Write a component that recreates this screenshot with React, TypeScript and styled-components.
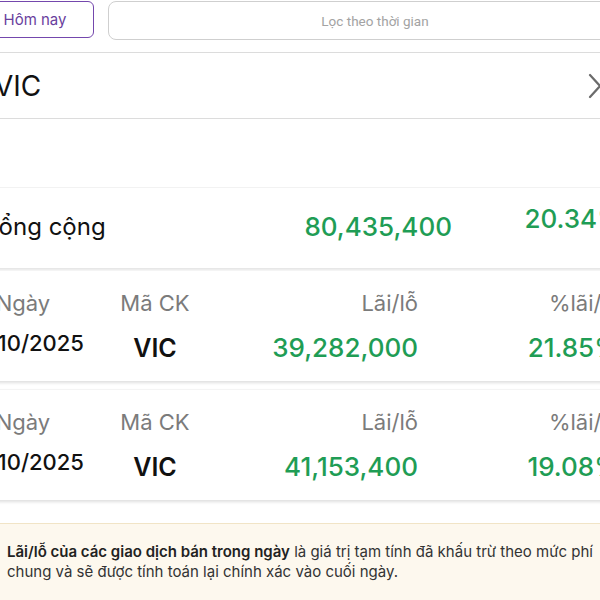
import React from 'react';
import styled, { createGlobalStyle } from 'styled-components';

const GlobalStyle = createGlobalStyle`
  html, body {
    margin: 0;
    padding: 0;
    background: #ffffff;
    font-family: Inter, "Noto Sans", sans-serif;
  }
`;

const Viewport = styled.div`
  width: 600px;
  height: 600px;
  overflow: hidden;
  background: #ffffff;
`;

const Stage = styled.div`
  width: 690px;
  margin-left: -40px;
`;

const Toolbar = styled.div`
  display: flex;
  gap: 14px;
  padding: 1px 8px 0 16px;
  height: 38px;
`;

const TodayButton = styled.button`
  width: 118px;
  height: 37px;
  border: 1.5px solid #7447ad;
  border-radius: 6px;
  background: #ffffff;
  color: #6a3f9e;
  font-family: Inter, sans-serif;
  font-size: 15px;
  padding: 0;
`;

const FilterInput = styled.div`
  flex: 1;
  height: 37px;
  border: 1.5px solid #cfcfcf;
  border-radius: 8px;
  display: flex;
  align-items: center;
  justify-content: center;
  color: #a3a3a3;
  font-family: Roboto, sans-serif;
  font-size: 13.5px;
`;

const SymbolRow = styled.div`
  margin-top: 13px;
  height: 65px;
  border-top: 1.5px solid #dcdcdc;
  border-bottom: 1.5px solid #dcdcdc;
  display: flex;
  align-items: center;
  justify-content: space-between;
  padding: 0 48px 0 34px;
  font-size: 28px;
  color: #111;
`;

const TotalRow = styled.div`
  margin-top: 68px;
  height: 76px;
  padding: 0 27px 4px 25px;
  border-top: 1px solid #f2f2f2;
  box-shadow: 0 2px 2px rgba(0, 0, 0, 0.1);
  display: grid;
  grid-template-columns: 1fr auto 171px;
  align-items: center;
`;

const TotalLabel = styled.div`
  font-size: 24px;
  color: #111;
`;

const Money = styled.div`
  color: #1f9d55;
  font-size: 26px;
  font-weight: 500;
  text-align: right;
  white-space: nowrap;
`;

const TotalPct = styled(Money)`
  margin-top: -16px;
`;

const Card = styled.div<{ $gap: number }>`
  margin-top: ${(p) => p.$gap}px;
  height: 110px;
  background: #ffffff;
  border-top: 1px solid #f4f4f4;
  box-shadow: 0 2px 3px rgba(0, 0, 0, 0.13);
  display: grid;
  grid-template-columns: 126px 138px 194px 202px;
  grid-template-rows: auto auto;
  align-content: center;
  row-gap: 14px;
`;

const Head = styled.div<{ $align: 'center' | 'right' }>`
  color: #7b7b7b;
  font-size: 22px;
  text-align: ${(p) => p.$align};
  white-space: nowrap;
`;

const DateCell = styled.div`
  color: #111;
  font-size: 22px;
  font-weight: 500;
  text-align: center;
  white-space: nowrap;
`;

const CodeCell = styled.div`
  color: #111;
  font-size: 25px;
  font-weight: 600;
  text-align: center;
  margin-top: 3px;
`;

const ValueCell = styled(Money)`
  margin-top: 2px;
`;

const Notice = styled.div`
  margin-top: 23px;
  height: 90px;
  background: #fdf8ee;
  border-top: 1.5px solid #f1e4c6;
  padding: 18px 49px 0 47px;
  font-size: 15px;
  line-height: 20px;
  color: #333;
`;

const Strong = styled.span`
  font-weight: 600;
  color: #222;
`;

const Chevron = () => (
  <svg width="14" height="26" viewBox="0 0 14 26">
    <polyline points="2,2 12,13 2,24" fill="none" stroke="#6b6b6b" strokeWidth="2.2" strokeLinecap="round" strokeLinejoin="round" />
  </svg>
);

const trades = [
  { date: '29/10/2025', code: 'VIC', pnl: '39,282,000', pct: '21.85%' },
  { date: '29/10/2025', code: 'VIC', pnl: '41,153,400', pct: '19.08%' },
];

export default function App() {
  return (
    <>
      <GlobalStyle />
      <Viewport>
        <Stage>
          <Toolbar>
            <TodayButton>Hôm nay</TodayButton>
            <FilterInput>Lọc theo thời gian</FilterInput>
          </Toolbar>
          <SymbolRow>
            <span>VIC</span>
            <Chevron />
          </SymbolRow>
          <TotalRow>
            <TotalLabel>Tổng cộng</TotalLabel>
            <Money>80,435,400</Money>
            <TotalPct>20.34%</TotalPct>
          </TotalRow>
          {trades.map((t, i) => (
            <Card key={i} $gap={i === 0 ? 2 : 8}>
              <Head $align="center">Ngày</Head>
              <Head $align="center">Mã CK</Head>
              <Head $align="right">Lãi/lỗ</Head>
              <Head $align="right">%lãi/lỗ</Head>
              <DateCell>{t.date}</DateCell>
              <CodeCell>{t.code}</CodeCell>
              <ValueCell>{t.pnl}</ValueCell>
              <ValueCell>{t.pct}</ValueCell>
            </Card>
          ))}
          <Notice>
            <Strong>Lãi/lỗ của các giao dịch bán trong ngày</Strong> là giá trị tạm tính đã khấu trừ theo mức phí
            chung và sẽ được tính toán lại chính xác vào cuối ngày.
          </Notice>
        </Stage>
      </Viewport>
    </>
  );
}
